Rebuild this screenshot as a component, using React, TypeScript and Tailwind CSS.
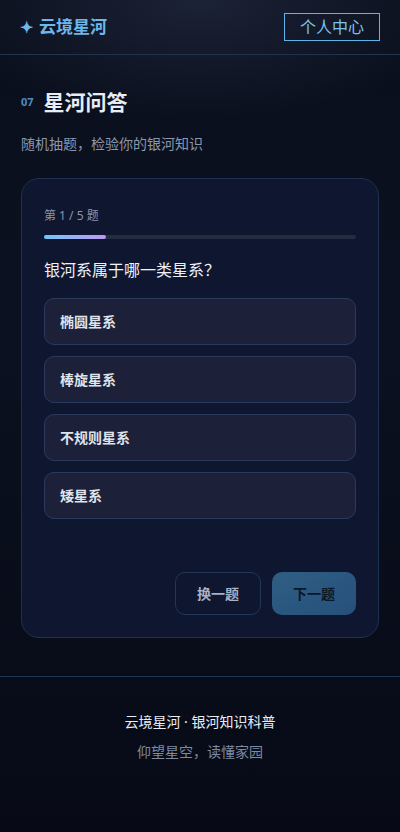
const options = ["椭圆星系", "棒旋星系", "不规则星系", "矮星系"];

export default function App() {
  return (
    <div
      className="min-h-[832px] w-[400px] bg-[#080c18] text-white"
      style={{
        fontFamily: '"Noto Sans", "Noto Sans CJK SC", sans-serif',
        backgroundImage:
          "radial-gradient(ellipse 260px 120px at 200px 0px, rgba(60,70,100,0.35), transparent), linear-gradient(180deg, #0a0f1c 0%, #0b1120 40%, #070a16 100%)",
      }}
    >
      {/* Header */}
      <header className="flex h-[55px] items-center justify-between border-b border-[#1d3550] px-5">
        <div className="flex items-center gap-1.5 text-[17px] font-bold text-[#6cb8ec]">
          <span className="text-[16px]">✦</span>
          <span>云境星河</span>
        </div>
        <button className="flex h-[28px] w-[96px] items-center justify-center border border-[#5cb4e8] text-[16px] text-[#7cc2ee]">
          个人中心
        </button>
      </header>

      {/* Section title */}
      <section className="px-[21px] pt-[32px]">
        <div className="flex items-center gap-2.5">
          <span className="text-[11px] font-bold text-[#4a8fc0]">07</span>
          <h1 className="text-[21px] font-bold leading-[30px] text-[#e8ecf4]">星河问答</h1>
        </div>
        <p className="mt-[17px] text-[14px] leading-[20px] text-[#8a97ad]">随机抽题，检验你的银河知识</p>

        {/* Quiz card */}
        <div className="mt-[24px] rounded-[18px] border border-[#1f3150] bg-[#0f1630] px-[22px] pb-[22px] pt-[28px]">
          <div className="text-[12px] leading-[18px] text-[#8a95aa]">第 1 / 5 题</div>
          <div className="mt-[10px] h-[4px] w-full rounded-full bg-[#252b40]">
            <div className="h-full w-[20%] rounded-full bg-gradient-to-r from-[#6cc6fa] to-[#b898f2]" />
          </div>
          <div className="mt-[20px] text-[16px] leading-[22px] text-[#eef1f7]">银河系属于哪一类星系？</div>

          <div className="mt-[17px] flex flex-col gap-[11px]">
            {options.map((o) => (
              <div
                key={o}
                className="flex h-[47px] items-center rounded-[10px] border border-[#2a3a5c] bg-[#1c2139] px-[15px] text-[14px] font-bold text-[#dfe3ec]"
              >
                {o}
              </div>
            ))}
          </div>

          <div className="mt-[53px] flex justify-end gap-[11px]">
            <button className="flex h-[43px] w-[86px] items-center justify-center rounded-[10px] border border-[#223656] text-[14px] font-bold text-[#a9b2c4]">
              换一题
            </button>
            <button className="flex h-[43px] w-[84px] items-center justify-center rounded-[10px] bg-gradient-to-br from-[#2f5e84] to-[#25507a] text-[14px] font-bold text-[#0b1626]">
              下一题
            </button>
          </div>
        </div>
      </section>

      {/* Footer */}
      <footer className="mt-[38px] border-t border-[#1d3550] pt-[35px] text-center">
        <div className="text-[14px] leading-[20px] text-[#e8ecf4]">云境星河 · 银河知识科普</div>
        <div className="mt-[10px] text-[14px] leading-[20px] text-[#7d8aa2]">仰望星空，读懂家园</div>
      </footer>
    </div>
  );
}
